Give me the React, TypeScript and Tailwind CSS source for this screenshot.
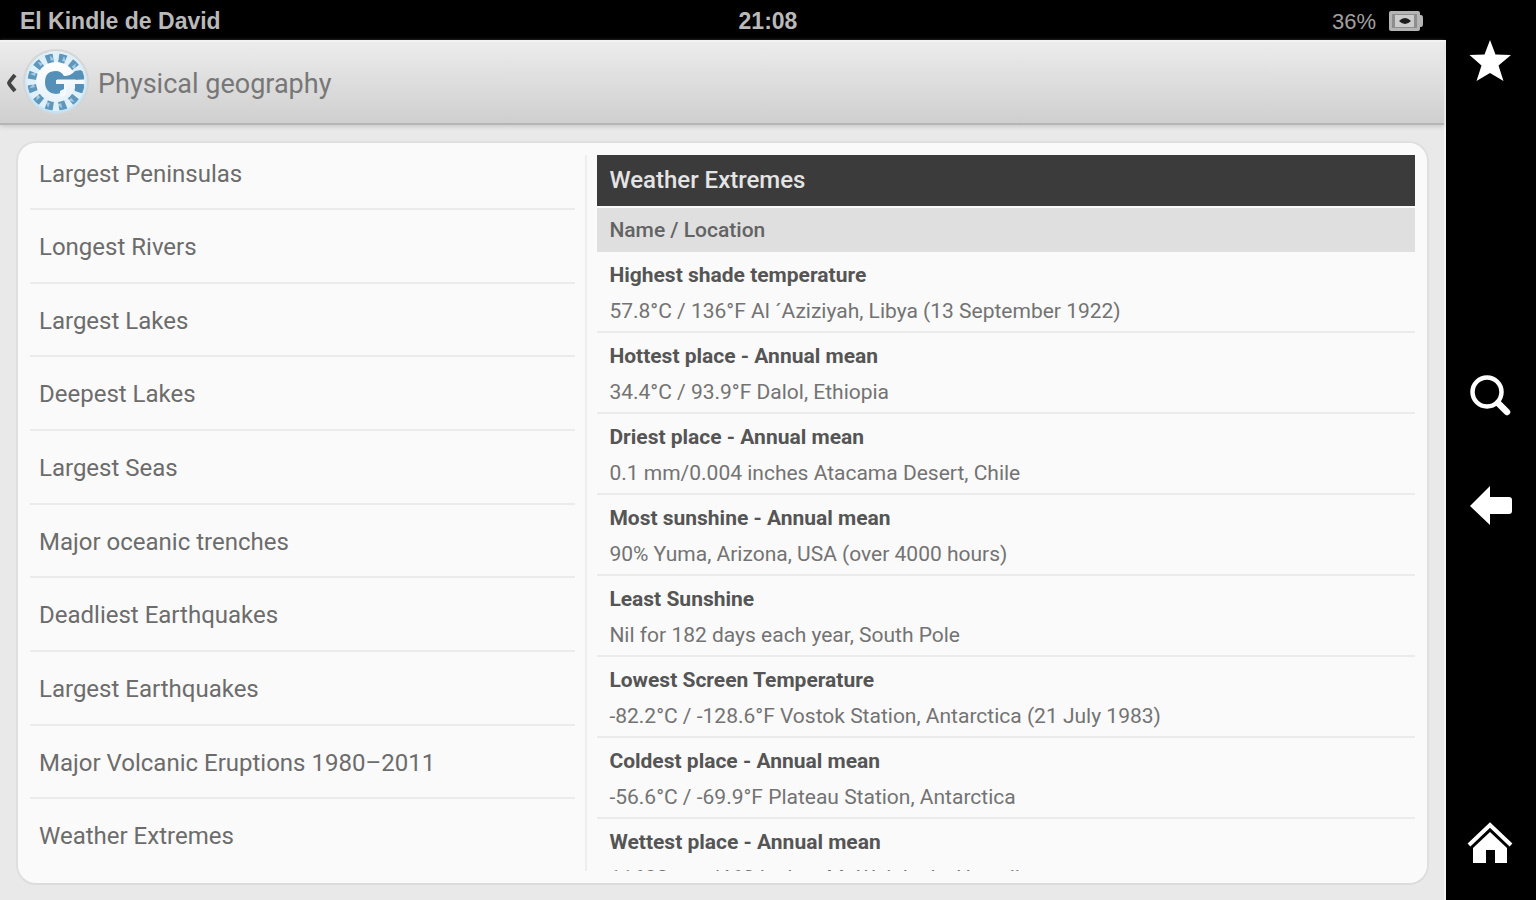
import React from 'react';

const TOPICS = [
  'Largest Peninsulas',
  'Longest Rivers',
  'Largest Lakes',
  'Deepest Lakes',
  'Largest Seas',
  'Major oceanic trenches',
  'Deadliest Earthquakes',
  'Largest Earthquakes',
  'Major Volcanic Eruptions 1980–2011',
  'Weather Extremes',
];

const RECORDS = [
  { name: 'Highest shade temperature', location: '57.8°C / 136°F Al ´Aziziyah, Libya (13 September 1922)' },
  { name: 'Hottest place - Annual mean', location: '34.4°C / 93.9°F Dalol, Ethiopia' },
  { name: 'Driest place - Annual mean', location: '0.1 mm/0.004 inches Atacama Desert, Chile' },
  { name: 'Most sunshine - Annual mean', location: '90% Yuma, Arizona, USA (over 4000 hours)' },
  { name: 'Least Sunshine', location: 'Nil for 182 days each year, South Pole' },
  { name: 'Lowest Screen Temperature', location: '-82.2°C / -128.6°F Vostok Station, Antarctica (21 July 1983)' },
  { name: 'Coldest place - Annual mean', location: '-56.6°C / -69.9°F Plateau Station, Antarctica' },
  { name: 'Wettest place - Annual mean', location: '11680 mm/460 inches Mt Waialeale, Hawaii' },
];

// Gaps between the twelve globe segments
const SPOKES = Array.from({ length: 12 }, (_, i) => i * 30);

function GlobeLogo() {
  return (
    <svg viewBox="0 1 68 68" className="h-[68px] w-[68px] shrink-0" aria-hidden="true">
      <defs>
        <linearGradient id="globe" x1="0" y1="0" x2="0" y2="1">
          <stop offset="0" stopColor="#e3f0f8" />
          <stop offset="1" stopColor="#c3e4f6" />
        </linearGradient>
        <linearGradient id="letter" x1="0" y1="0" x2="0" y2="1">
          <stop offset="0" stopColor="#ffffff" />
          <stop offset="1" stopColor="#e6f1f8" />
        </linearGradient>
      </defs>
      <circle cx="34" cy="34" r="33" fill="#d3d5d6" />
      <circle cx="34" cy="34" r="31" fill="url(#globe)" />
      <circle cx="34" cy="34" r="24" fill="none" stroke="#5f97bc" strokeWidth="9" />
      {SPOKES.map((angle) => (
        <g key={angle} transform={`rotate(${angle} 34 34)`}>
          <path d="M32 15h4l1.500-10h-7z" fill="#e0f0f9" />
          <path d="M40 13l2-5 2 6z" fill="#a5cbe2" />
        </g>
      ))}
      <circle cx="34" cy="34" r="20" fill="url(#letter)" />
      <path
        d="M34 23q5 0 8 5 7 0 11-5l6-1q3 5 3 9.500H35v4.500h8v7q-4 3-9 3-11-1-11-12t11-11z"
        fill="#5590b8"
      />
      <path d="M34 32h28v4H44v11q-3 2-6 2v-6l4-2v-5h-8z" fill="#f4f9fc" />
      <path d="M53 36h9q0 5-3 9l-6-2z" fill="#5590b8" />
    </svg>
  );
}

function BatteryIcon() {
  return (
    <svg viewBox="0 0 36 22" className="h-[22px] w-9" aria-hidden="true">
      <rect x="1" y="1" width="31" height="20" rx="2" fill="#b4b4b4" />
      <rect x="4" y="4" width="25" height="14" fill="#8e8e8e" />
      <rect x="7" y="5" width="19" height="12" fill="#cccccc" />
      <path d="M32 5h1q2 0 2 3v6q0 3-2 3h-1z" fill="#b4b4b4" />
      <path d="M11 11q6-6 12 0-6 6-12 0z" fill="#1c1c1c" />
    </svg>
  );
}

function StatusBar() {
  return (
    <div className="grid h-10 shrink-0 grid-cols-[1fr_auto_1fr] items-center bg-black px-5 pt-0.5 font-['Liberation_Sans',sans-serif] text-[23px] text-[#b9b9b9]">
      <span className="font-bold">El Kindle de David</span>
      <span className="pl-[90px] font-bold">21:08</span>
      <div className="flex items-center justify-end gap-3 pr-0.5">
        <span className="text-[22px] text-[#a0a0a0]">36%</span>
        <BatteryIcon />
      </div>
    </div>
  );
}

function RailButton({ label, children }: { label: string; children: React.ReactNode }) {
  return (
    <button type="button" aria-label={label} className="flex h-12 w-12 items-center justify-center">
      <svg viewBox="0 0 48 48" className="h-12 w-12" fill="white">
        {children}
      </svg>
    </button>
  );
}

function NavRail() {
  return (
    <nav className="flex w-[90px] shrink-0 flex-col items-center justify-between bg-black pt-[37px] pb-8">
      <RailButton label="Favourites">
        <path d="M23 3l5.500 14.500L44 18 31.500 28.500 36.500 44 23 36 9.500 44 14.500 28.500 2.500 18l15-.5z" />
      </RailButton>
      <div className="flex flex-col gap-[62px] pb-1">
        <RailButton label="Search">
          <circle cx="20" cy="20" r="14.500" fill="none" stroke="white" strokeWidth="4.500" />
          <path d="M31 31l9 9" stroke="white" strokeWidth="6.500" strokeLinecap="round" />
        </RailButton>
        <RailButton label="Back">
          <path d="M3 24L23 4v11h19q3 0 3 3v11q0 3-3 3H23v11z" />
        </RailButton>
      </div>
      <RailButton label="Home">
        <path d="M2 25L23 5l21 20" fill="none" stroke="white" strokeWidth="4" />
        <path d="M23 12L40 28v15H28V30h-9v13H6V28z" />
      </RailButton>
    </nav>
  );
}

function TopicList() {
  return (
    <ul className="flex flex-[575] flex-col overflow-hidden">
      {TOPICS.map((topic) => (
        <li
          key={topic}
          className="flex flex-1 border-b-2 border-[#ebebeb] pt-0.5 first:h-[55px] first:flex-none first:pb-[18px] last:border-b-0"
        >
          <a href="#" className="flex w-full items-center pl-[9px] text-[24px] text-[#6c6c6c]">
            {topic}
          </a>
        </li>
      ))}
    </ul>
  );
}

function RecordTable() {
  return (
    <section className="flex-[862] overflow-hidden">
      <h2 className="mb-0.5 flex h-[51px] items-center bg-[#3b3b3b] px-3 pb-0.5 text-[24px] font-medium text-[#e4e4e4]">
        Weather Extremes
      </h2>
      <table className="w-full border-collapse text-left text-[21px]">
        <thead>
          <tr>
            <th className="h-11 bg-[#dfdfdf] px-3 pt-0.5 pb-0 font-medium text-[#636363]">Name / Location</th>
          </tr>
        </thead>
        <tbody>
          {RECORDS.map(({ name, location }) => (
            <tr key={name}>
              <td className="border-b-2 border-[#ebebeb] px-3 pt-[5px] pb-0.5 leading-9 text-[#737373]">
                <strong className="block font-bold text-[#555]">{name}</strong>
                <span className="block whitespace-nowrap">{location}</span>
              </td>
            </tr>
          ))}
        </tbody>
      </table>
    </section>
  );
}

export default function App() {
  return (
    <div className="flex h-screen overflow-hidden bg-[#e9e9e9] font-[Roboto,sans-serif]">
      <div className="flex min-w-0 flex-1 flex-col bg-black">
        <StatusBar />
        <div className="flex min-h-0 flex-1 flex-col border-r-2 border-[#f6f6f6] bg-[#e9e9e9]">
          <header className="flex h-[85px] shrink-0 items-center border-t-2 border-b-2 border-t-[#f2f2f2] border-b-[#b5b5b5] bg-linear-to-b from-[#ececec] to-[#cfcfcf] shadow-[0_2px_4px_#cccccc]">
            <button type="button" aria-label="Go back" className="flex items-center pl-1.5">
              <svg viewBox="0 0 16 24" className="h-6 w-4" fill="none" stroke="#444" strokeWidth="4" aria-hidden="true">
                <path d="M9 4q-6 7-6 8t6 8" />
              </svg>
              <GlobeLogo />
            </button>
            <h1 className="pt-1 pl-2 text-[27px] text-[#777]">Physical geography</h1>
          </header>
          <main className="flex min-h-0 flex-1 pt-4 pr-[15px] pb-[15px] pl-4">
            <div className="flex min-w-0 flex-1 rounded-[20px] border-2 border-t-[#dfdfdf] border-r-[#dfdfdf] border-b-[#dcdcdc] border-l-[#dfdfdf] bg-[#fafafa] p-3">
              <TopicList />
              <div className="mx-2.5 w-0.5 shrink-0 bg-[#eeeeee]" />
              <RecordTable />
            </div>
          </main>
        </div>
      </div>
      <NavRail />
    </div>
  );
}
